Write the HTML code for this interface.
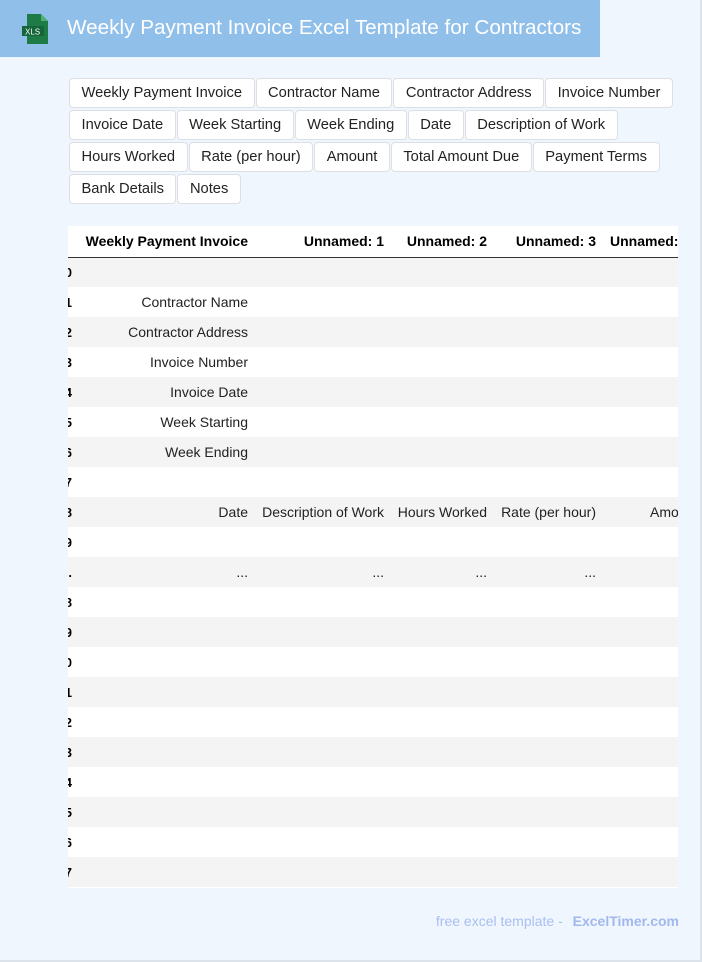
<!DOCTYPE html>
<html><head><meta charset="utf-8"><style>
*{margin:0;padding:0;box-sizing:border-box}
body{width:702px;height:962px;background:#f0f6fe;font-family:"Liberation Sans",Arial,sans-serif;position:relative;overflow:hidden;border-right:2px solid #dde3ea;border-bottom:2px solid #dde3ea}
.hdr{position:absolute;left:0;top:0;width:600px;height:57px;background:#90bfea}
.hdr h1{position:absolute;left:67px;top:16px;font-size:20.7px;font-weight:normal;color:#fff;white-space:nowrap}
.tags{position:absolute;left:69px;top:78px;width:612px}
.tag{display:inline-block;height:30px;line-height:28px;padding:0 11.5px;font-size:14.7px;color:#222;background:#fff;border:1px solid #dcdfe3;border-radius:4px;margin:0 1px 2px 0;vertical-align:top}
.tw{position:absolute;left:68px;top:226px;width:610px;height:662px;overflow:hidden;background:#fff}
table{position:absolute;left:-4px;top:0;border-collapse:collapse;table-layout:fixed;width:720px}
td,th{height:30px;text-align:right;padding-right:8px;white-space:nowrap;overflow:hidden;font-size:14px;color:#222}
th{font-size:14px;font-weight:bold;color:#000;border-bottom:1px solid #333;height:31px}
td.i{font-weight:bold;font-size:13px;padding-right:6px;text-align:right;color:#000}
tr:nth-child(odd) td{background:#f4f4f4}
.foot{position:absolute;right:21px;top:913px;font-size:14px;color:#a9bff0}
.foot b{color:#a0b8ee;margin-left:6px}
</style></head><body>
<div class="hdr">
<svg style="position:absolute;left:22px;top:14px" width="28" height="30" viewBox="0 0 28 30"><path d="M5 0h14l7 7v23H5z" fill="#1e7b45"/><path d="M19 0v7h7z" fill="#4fae74"/><rect x="0" y="12" width="22" height="10" fill="#15653a"/><text x="3" y="20.5" font-size="8" fill="#fff" font-family="Liberation Sans">XLS</text></svg>
<h1>Weekly Payment Invoice Excel Template for Contractors</h1></div>
<div class="tags">
<span class="tag">Weekly Payment Invoice</span><span class="tag">Contractor Name</span><span class="tag">Contractor Address</span><span class="tag">Invoice Number</span><br>
<span class="tag">Invoice Date</span><span class="tag">Week Starting</span><span class="tag">Week Ending</span><span class="tag">Date</span><span class="tag">Description of Work</span><br>
<span class="tag">Hours Worked</span><span class="tag">Rate (per hour)</span><span class="tag">Amount</span><span class="tag">Total Amount Due</span><span class="tag">Payment Terms</span><br>
<span class="tag">Bank Details</span><span class="tag">Notes</span>
</div>
<div class="tw"><table>
<colgroup><col style="width:14px"><col style="width:178px"><col style="width:136px"><col style="width:103px"><col style="width:109px"><col style="width:180px"></colgroup>
<tr style="background:#fff"><th></th><th>Weekly Payment Invoice</th><th>Unnamed: 1</th><th>Unnamed: 2</th><th>Unnamed: 3</th><th style="text-align:left;padding-left:6px">Unnamed: 4</th></tr>
<tbody>
<tr><td class="i">0</td><td></td><td></td><td></td><td></td><td></td></tr>
<tr><td class="i">1</td><td>Contractor Name</td><td></td><td></td><td></td><td></td></tr>
<tr><td class="i">2</td><td>Contractor Address</td><td></td><td></td><td></td><td></td></tr>
<tr><td class="i">3</td><td>Invoice Number</td><td></td><td></td><td></td><td></td></tr>
<tr><td class="i">4</td><td>Invoice Date</td><td></td><td></td><td></td><td></td></tr>
<tr><td class="i">5</td><td>Week Starting</td><td></td><td></td><td></td><td></td></tr>
<tr><td class="i">6</td><td>Week Ending</td><td></td><td></td><td></td><td></td></tr>
<tr><td class="i">7</td><td></td><td></td><td></td><td></td><td></td></tr>
<tr><td class="i">8</td><td>Date</td><td>Description of Work</td><td>Hours Worked</td><td>Rate (per hour)</td><td style="text-align:left;padding-left:46px">Amount</td></tr>
<tr><td class="i">9</td><td></td><td></td><td></td><td></td><td></td></tr>
<tr><td class="i">.</td><td>...</td><td>...</td><td>...</td><td>...</td><td></td></tr>
<tr><td class="i">8</td><td></td><td></td><td></td><td></td><td></td></tr>
<tr><td class="i">9</td><td></td><td></td><td></td><td></td><td></td></tr>
<tr><td class="i">0</td><td></td><td></td><td></td><td></td><td></td></tr>
<tr><td class="i">1</td><td></td><td></td><td></td><td></td><td></td></tr>
<tr><td class="i">2</td><td></td><td></td><td></td><td></td><td></td></tr>
<tr><td class="i">3</td><td></td><td></td><td></td><td></td><td></td></tr>
<tr><td class="i">4</td><td></td><td></td><td></td><td></td><td></td></tr>
<tr><td class="i">5</td><td></td><td></td><td></td><td></td><td></td></tr>
<tr><td class="i">6</td><td></td><td></td><td></td><td></td><td></td></tr>
<tr><td class="i">7</td><td></td><td></td><td></td><td></td><td></td></tr>
</tbody></table></div>
<div class="foot">free excel template - <b>ExcelTimer.com</b></div>
</body></html>
